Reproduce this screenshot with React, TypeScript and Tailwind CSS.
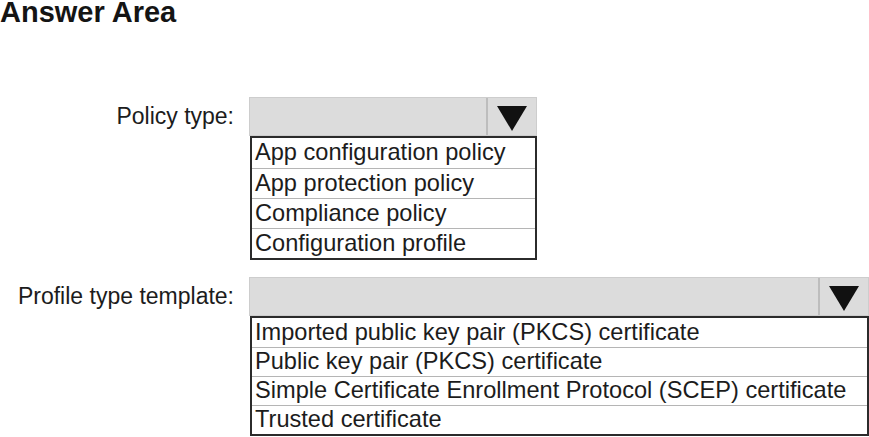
const POLICY_TYPES = [
  'App configuration policy',
  'App protection policy',
  'Compliance policy',
  'Configuration profile',
]

const PROFILE_TEMPLATES = [
  'Imported public key pair (PKCS) certificate',
  'Public key pair (PKCS) certificate',
  'Simple Certificate Enrollment Protocol (SCEP) certificate',
  'Trusted certificate',
]

function Arrow() {
  return (
    <svg width="30" height="25" viewBox="0 0 30 25" className="mt-[4px]">
      <polygon points="0,0 30,0 15,25" fill="#111" />
    </svg>
  )
}

function DropDown({
  label,
  options,
  width,
  rowHeight,
}: {
  label: string
  options: string[]
  width: string
  rowHeight: string
}) {
  return (
    <div className="flex items-start">
      <div className="w-[234px] h-[39px] flex items-center justify-end text-[23px] text-[#1c1c1c] whitespace-nowrap">
        {label}
      </div>
      <div className={`ml-[15px] flex flex-col ${width}`}>
        {/* closed select */}
        <div className="h-[39px] flex bg-[#dcdcdc] border border-[#cdcdcd]">
          <div className="flex-1" />
          <div className="w-[50px] border-l-2 border-[#bdbdbd] flex items-center justify-center">
            <Arrow />
          </div>
        </div>
        {/* options list */}
        <div className="ml-[1px] border-2 border-[#2b2b2b] bg-white">
          {options.map((opt, i) => (
            <div
              key={opt}
              className={`${rowHeight} flex items-center pl-[3px] text-[23.6px] text-[#1c1c1c] whitespace-nowrap ${
                i > 0 ? 'border-t border-[#b5b5b5]' : ''
              }`}
            >
              {opt}
            </div>
          ))}
        </div>
      </div>
    </div>
  )
}

export default function App() {
  return (
    <div
      className="w-[869px] h-[437px] overflow-hidden bg-white"
      style={{ fontFamily: '"Liberation Sans", Arial, sans-serif' }}
    >
      <h1 className="text-[29px] leading-[25px] font-bold text-[#141414]">Answer Area</h1>

      <div className="mt-[72px]">
        <DropDown label="Policy type:" options={POLICY_TYPES} width="w-[288px]" rowHeight="h-[30px]" />
      </div>

      <div className="mt-[17px]">
        <DropDown label="Profile type template:" options={PROFILE_TEMPLATES} width="w-[620px]" rowHeight="h-[29px]" />
      </div>
    </div>
  )
}
